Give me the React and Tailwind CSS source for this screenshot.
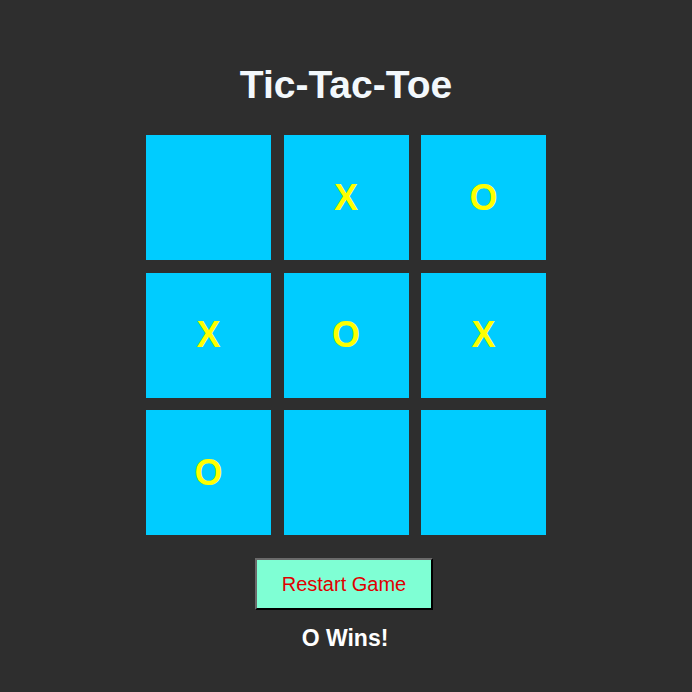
import React, { useState } from "react";

const lines = [
  [0, 1, 2],
  [3, 4, 5],
  [6, 7, 8],
  [0, 3, 6],
  [1, 4, 7],
  [2, 5, 8],
  [0, 4, 8],
  [2, 4, 6],
];

const startBoard = [null, "X", "O", "X", "O", "X", "O", null, null];

const getWinner = (squares) => {
  for (const [a, b, c] of lines) {
    if (squares[a] && squares[a] === squares[b] && squares[a] === squares[c]) {
      return squares[a];
    }
  }
  return null;
};

const App = () => {
  const [board, setBoard] = useState(startBoard);
  const [xNext, setXNext] = useState(true);
  const winner = getWinner(board);

  const clickCell = (i) => {
    if (board[i] || winner) return;
    const next = [...board];
    next[i] = xNext ? "X" : "O";
    setBoard(next);
    setXNext(!xNext);
  };

  const restart = () => {
    setBoard(Array(9).fill(null));
    setXNext(true);
  };

  return (
    <div
      className="min-h-[692px] w-full bg-[#2e2e2e] flex flex-col items-center pt-[65px]"
      style={{ fontFamily: '"Liberation Sans", Arial, sans-serif' }}>
      <h1 className="text-[39px] leading-none font-bold text-[#f3f8fc]">Tic-Tac-Toe</h1>

      <div className="mt-[31px] grid w-[400px] grid-cols-3 gap-[12.5px]">
        {board.map((cell, i) => (
          <div
            key={i}
            onClick={() => clickCell(i)}
            className="h-[125px] bg-[#00ccff] flex items-center justify-center cursor-pointer">
            <span className="text-[36px] leading-none font-bold text-[#ffff00]">{cell}</span>
          </div>
        ))}
      </div>

      <button
        onClick={restart}
        className="mt-[23px] mr-[4px] w-[178px] h-[52px] bg-[#7fffd4] border-2 border-t-[#6a6a6a] border-l-[#6a6a6a] border-b-black border-r-black text-[20px] leading-none text-[#e00000] cursor-pointer">
        Restart Game
      </button>

      <p className="mt-[17px] mr-[2px] text-[23px] leading-none font-bold text-white">
        {winner ? `${winner} Wins!` : `Next: ${xNext ? "X" : "O"}`}
      </p>
    </div>
  );
};

export default App;
